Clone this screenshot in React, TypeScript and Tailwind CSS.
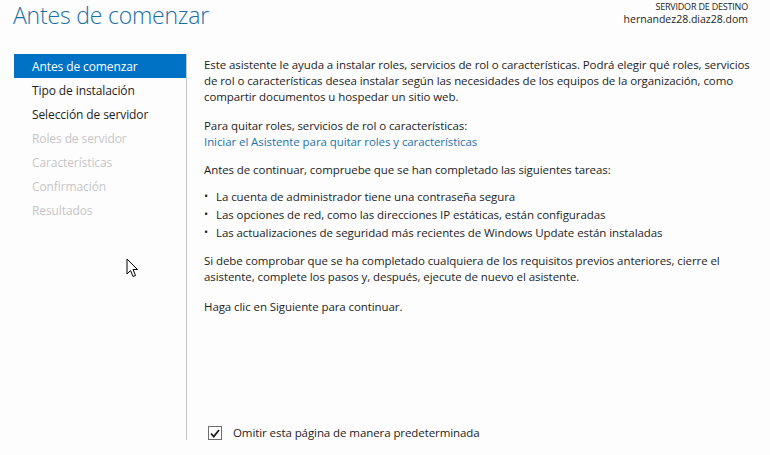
const steps = [
  { label: "Antes de comenzar", state: "active" },
  { label: "Tipo de instalación", state: "enabled" },
  { label: "Selección de servidor", state: "enabled" },
  { label: "Roles de servidor", state: "disabled" },
  { label: "Características", state: "disabled" },
  { label: "Confirmación", state: "disabled" },
  { label: "Resultados", state: "disabled" },
]

const tasks = [
  "La cuenta de administrador tiene una contraseña segura",
  "Las opciones de red, como las direcciones IP estáticas, están configuradas",
  "Las actualizaciones de seguridad más recientes de Windows Update están instaladas",
]

function Cursor() {
  return (
    <svg width="13" height="20" viewBox="0 0 13 20" className="absolute left-[126px] top-[258px]">
      <path
        d="M1 1 L1 16 L4.5 12.5 L7 18.5 L9.5 17.5 L7 11.5 L11.5 11.5 Z"
        fill="#fff"
        stroke="#000"
        strokeWidth="1"
        strokeLinejoin="miter"
      />
    </svg>
  )
}

export default function App() {
  return (
    <div className="relative flex h-[455px] w-[770px] flex-col overflow-hidden bg-[#fdfdfd] font-['Open_Sans',sans-serif] text-[11.5px] tracking-[-0.08px] text-[#1e1e1e]">
      <header className="flex h-[54px] items-start justify-between pl-[13px] pr-[22px]">
        <h1 className="mt-[-1px] text-[23px] font-light leading-[32px] tracking-[-0.2px] text-[#1b6fa3]">Antes de comenzar</h1>
        <div className="text-right leading-[13px] text-[#1e1e1e]">
          <div className="text-[9px] tracking-[-0.2px]">SERVIDOR DE DESTINO</div>
          <div className="text-[10.5px] tracking-[0px]">hernandez28.diaz28.dom</div>
        </div>
      </header>

      <div className="flex flex-1">
        <nav className="flex h-[386px] w-[187px] shrink-0 flex-col border-r border-[#c8c8c8] pl-[14px] text-[12px] tracking-[-0.1px]">
          {steps.map((s) => (
            <div
              key={s.label}
              className={
                s.state === "active"
                  ? "h-[24px] bg-[#0072c6] pl-[18px] pt-[1px] leading-[24px] text-white"
                  : s.state === "enabled"
                    ? "h-[24px] pl-[18px] pt-[1px] leading-[24px] text-[#1e1e1e]"
                    : "h-[24px] pl-[18px] pt-[1px] leading-[24px] text-[#c6c6c6]"
              }
            >
              {s.label}
            </div>
          ))}
        </nav>

        <main className="flex min-w-0 flex-1 flex-col pl-[17px] pt-[3px] leading-[16px]">
          <p className="whitespace-nowrap">
            Este asistente le ayuda a instalar roles, servicios de rol o características. Podrá elegir qué roles, servicios
            <br />
            de rol o características desea instalar según las necesidades de los equipos de la organización, como
            <br />
            compartir documentos u hospedar un sitio web.
          </p>
          <p className="mt-[13px] whitespace-nowrap">
            Para quitar roles, servicios de rol o características:
            <br />
            <a className="text-[#1e73a8]">Iniciar el Asistente para quitar roles y características</a>
          </p>
          <p className="mt-[12px] whitespace-nowrap">Antes de continuar, compruebe que se han completado las siguientes tareas:</p>
          <ul className="mt-[10px] flex flex-col">
            {tasks.map((t) => (
              <li key={t} className="flex h-[18px] items-center whitespace-nowrap">
                <span className="w-[12px] pb-[2px] text-[11px]">•</span>
                {t}
              </li>
            ))}
          </ul>
          <p className="mt-[11px] whitespace-nowrap">
            Si debe comprobar que se ha completado cualquiera de los requisitos previos anteriores, cierre el
            <br />
            asistente, complete los pasos y, después, ejecute de nuevo el asistente.
          </p>
          <p className="mt-[14px] whitespace-nowrap">Haga clic en Siguiente para continuar.</p>

          <label className="mt-auto mb-[14px] flex items-center gap-[11px] pl-[4px]">
            <span className="flex h-[14px] w-[14px] items-center justify-center border border-[#6e6e6e] bg-white">
              <svg width="10" height="9" viewBox="0 0 10 9">
                <path d="M1 4.5 L3.8 7.5 L9 1" fill="none" stroke="#1e1e1e" strokeWidth="1.8" />
              </svg>
            </span>
            Omitir esta página de manera predeterminada
          </label>
        </main>
      </div>

      <Cursor />
    </div>
  )
}
